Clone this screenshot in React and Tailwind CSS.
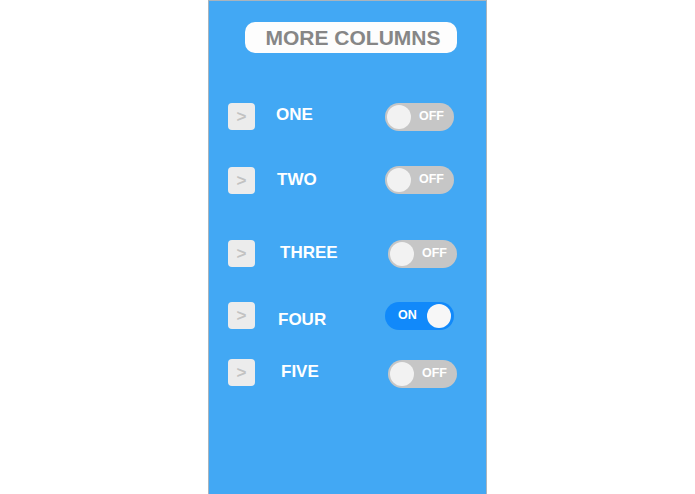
import React from "react";

const rows = [
  { label: "ONE", row: "mt-[50px]", box: "mt-0", lab: "mt-[2px] ml-[21px]", tog: "mt-0 mr-[32px]", on: false },
  { label: "TWO", row: "mt-[35px]", box: "mt-[1px]", lab: "mt-[4px] ml-[22px]", tog: "mt-0 mr-[32px]", on: false },
  { label: "THREE", row: "mt-[46px]", box: "mt-0", lab: "mt-[3px] ml-[25px]", tog: "mt-0 mr-[29px]", on: false },
  { label: "FOUR", row: "mt-[34px]", box: "mt-0", lab: "mt-[8px] ml-[23px]", tog: "mt-0 mr-[32px]", on: true },
  { label: "FIVE", row: "mt-[29px]", box: "mt-0", lab: "mt-[3px] ml-[26px]", tog: "mt-[1px] mr-[29px]", on: false },
];

function Toggle({ on, cls }) {
  if (on) {
    return (
      <div className={`relative h-[28px] w-[69px] rounded-full bg-[#1189fa] ${cls}`}>
        <span className="absolute left-[13px] top-[5px] text-[12.5px] font-bold leading-[16px] text-white">ON</span>
        <span className="absolute right-[3px] top-[2px] h-[24px] w-[24px] rounded-full bg-[#f7f7f7]" />
      </div>
    );
  }
  return (
    <div className={`relative h-[28px] w-[69px] rounded-full bg-[#c6c6c6] ${cls}`}>
      <span className="absolute left-[2px] top-[2px] h-[24px] w-[24px] rounded-full bg-[#f2f2f2]" />
      <span className="absolute left-[34px] top-[5px] text-[12.5px] font-bold leading-[16px] text-white">OFF</span>
    </div>
  );
}

export default function App() {
  return (
    <div className="flex h-[494px] w-full justify-center bg-white" style={{ fontFamily: '"Liberation Sans", Arial, sans-serif' }}>
      <div className="flex h-[494px] w-[279px] flex-col border-x border-t border-[#a9b4bd] bg-[#42a8f4]">
        <div className="ml-[36px] mt-[21px] flex h-[31px] w-[212px] items-center justify-center rounded-[10px] bg-[#fdfdfd] pl-[4px]">
          <span className="text-[21px] font-bold leading-[24px] text-[#868686]">MORE COLUMNS</span>
        </div>
        {rows.map((r) => (
          <div key={r.label} className={`flex h-[28px] items-start pl-[19px] ${r.row}`}>
            <div className={`flex h-[27px] w-[27px] items-center justify-center rounded-[4px] bg-[#ececec] ${r.box}`}>
              <span className="text-[17px] font-bold leading-[18px] text-[#c2c2c2]">&gt;</span>
            </div>
            <span className={`text-[17px] font-bold leading-[20px] text-white ${r.lab}`}>{r.label}</span>
            <div className="flex-1" />
            <Toggle on={r.on} cls={r.tog} />
          </div>
        ))}
      </div>
    </div>
  );
}
